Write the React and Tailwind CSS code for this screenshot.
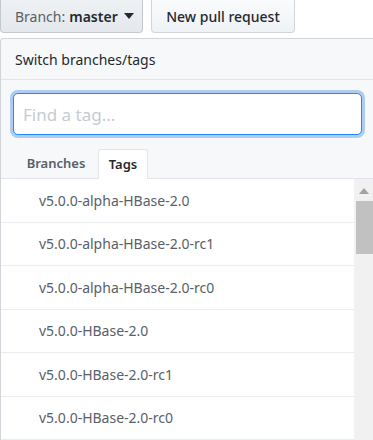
import React from "react";

const tags = [
  "v5.0.0-alpha-HBase-2.0",
  "v5.0.0-alpha-HBase-2.0-rc1",
  "v5.0.0-alpha-HBase-2.0-rc0",
  "v5.0.0-HBase-2.0",
  "v5.0.0-HBase-2.0-rc1",
  "v5.0.0-HBase-2.0-rc0",
];

export default function App() {
  return (
    <div
      className="w-[373px] h-[440px] overflow-hidden bg-white text-[#24292e]"
      style={{ fontFamily: '"Noto Sans", "Open Sans", sans-serif' }}
    >
      {/* top buttons, cut off at the top of the view */}
      <div className="flex gap-2 h-[38px] items-end">
        <button className="h-[33px] w-[143px] mb-[5px] flex items-center pl-[14px] gap-1 rounded-b-[4px] border border-t-0 border-[#c5c9ce] bg-gradient-to-b from-[#eef1f4] to-[#e4e8ec] text-[14px]">
          <span className="text-[#586069]">Branch:</span>
          <span className="font-semibold text-[#24292e]">master</span>
          <svg width="10" height="6" viewBox="0 0 10 6" className="ml-[2px]">
            <path d="M0 0h10L5 6z" fill="#24292e" />
          </svg>
        </button>
        <button className="h-[33px] w-[144px] mb-[5px] flex items-center justify-center rounded-b-[4px] border border-t-0 border-[#d1d5da] bg-gradient-to-b from-[#fafbfc] to-[#eff3f6] text-[14px] font-medium">
          New pull request
        </button>
      </div>

      {/* dropdown panel */}
      <div className="w-[400px] border-l border-t border-[#d1d5da] rounded-tl-[4px] bg-[#f6f8fa]">
        <div className="h-[41px] flex items-center pl-[14px] border-b border-[#e1e4e8] text-[14px]">
          Switch branches/tags
        </div>
        <div className="pt-[13px] pl-[12px] pb-[14px]">
          <input
            placeholder="Find a tag..."
            className="w-[349px] h-[42px] rounded-[5px] border border-[#2188ff] bg-white px-[9px] text-[17px] outline-none shadow-[0_0_0_3px_rgba(3,102,214,0.3)] placeholder:text-[#c6cbd1]"
          />
        </div>
        <div className="flex items-end h-[30px] pl-[13px] border-b border-[#e1e4e8]">
          <div className="h-[29px] w-[84px] flex items-center justify-center text-[13px] font-semibold text-[#586069]">
            Branches
          </div>
          <div className="h-[30px] w-[50px] -mb-px flex items-center justify-center rounded-t-[3px] border border-b-0 border-[#e1e4e8] bg-white text-[13px] font-semibold text-[#24292e]">
            Tags
          </div>
        </div>
        <div className="flex bg-white">
          <div className="w-[353px]">
            {tags.map((t) => (
              <div
                key={t}
                className="h-[43.5px] flex items-center pl-[38px] border-b border-[#eaecef] text-[14px] text-[#586069]"
              >
                {t}
              </div>
            ))}
          </div>
          <div className="w-[20px] h-[262px] bg-[#f1f1f1] flex flex-col items-center">
            <svg width="10" height="6" viewBox="0 0 10 6" className="mt-[9px]">
              <path d="M0 6h10L5 0z" fill="#a3a3a3" />
            </svg>
            <div className="mt-[7px] w-[17px] h-[53px] bg-[#c1c1c1]" />
          </div>
        </div>
      </div>
    </div>
  );
}
